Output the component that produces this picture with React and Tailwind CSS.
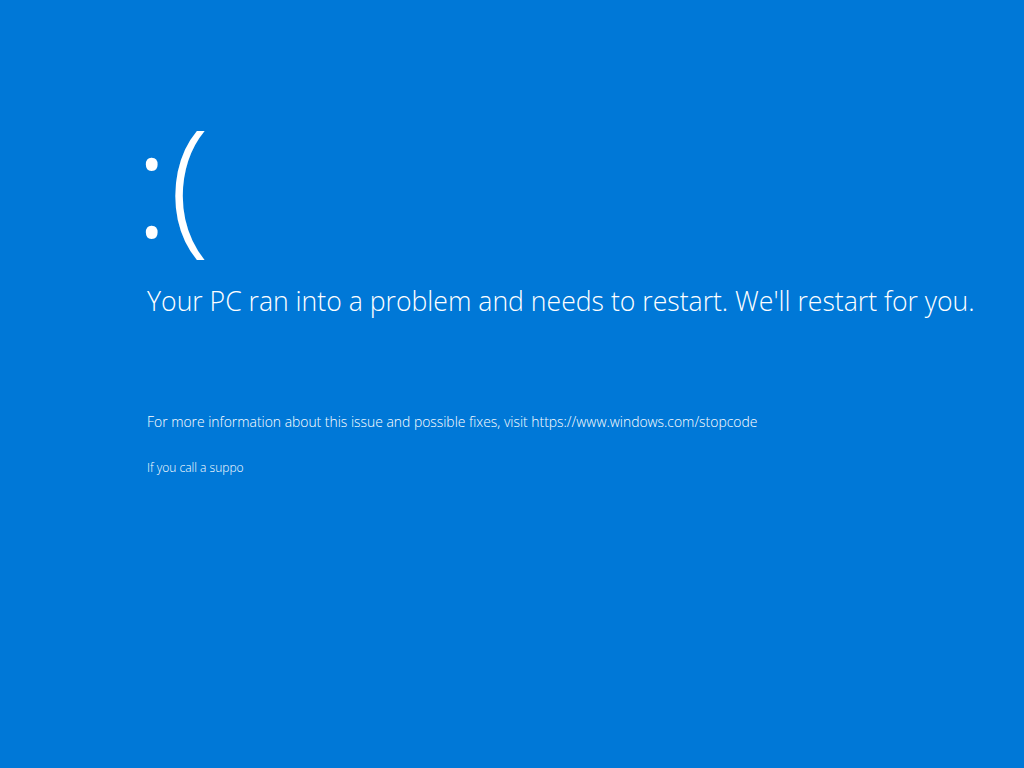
export default function App() {
  return (
    <div
      className="w-[1024px] h-[768px] bg-[#0078d7] text-white overflow-hidden"
      style={{ fontFamily: '"Open Sans", "Noto Sans", sans-serif' }}
    >
      <div className="pl-[140px] pt-[105px] flex flex-col">
        <div className="-ml-[6px] text-[148px] leading-[150px] font-light">:(</div>
        <div className="mt-[29px] pl-[7px] text-[26.6px] leading-[34px] font-light whitespace-nowrap">
          Your PC ran into a problem and needs to restart. We'll restart for you.
        </div>
        <div className="mt-[95px] pl-[7px] text-[13.9px] leading-[18px] font-light whitespace-nowrap">
          For more information about this issue and possible fixes, visit https://www.windows.com/stopcode
        </div>
        <div className="mt-[29px] pl-[7px] text-[12px] leading-[16px] font-light">If you call a suppo</div>
      </div>
    </div>
  );
}
